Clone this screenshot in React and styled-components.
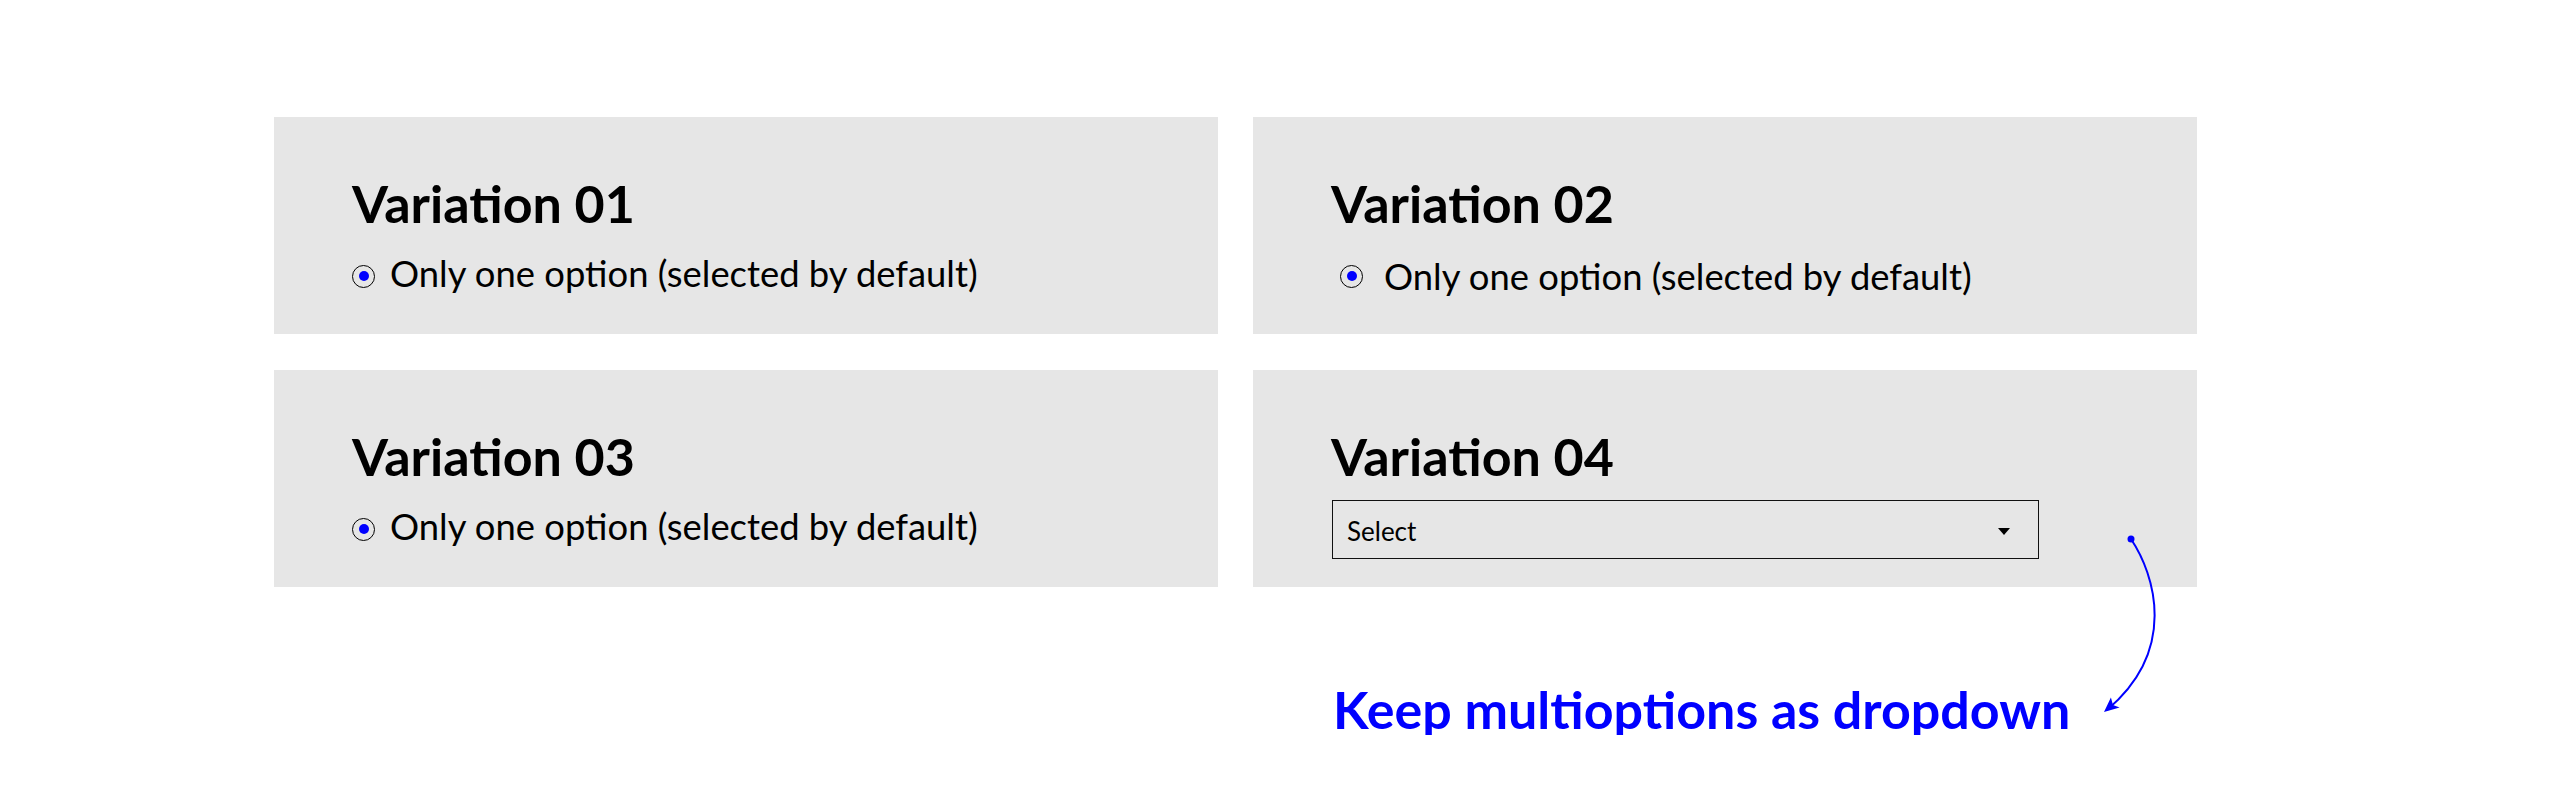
import React from "react";
import styled, { createGlobalStyle } from "styled-components";

const GlobalStyle = createGlobalStyle`
  body {
    margin: 0;
    background: #ffffff;
    font-family: Lato, "Open Sans", sans-serif;
  }
`;

const Page = styled.div`
  padding: 117px 0 0 274px;
`;

const Grid = styled.div`
  display: grid;
  grid-template-columns: 944px 944px;
  column-gap: 35px;
  row-gap: 36px;
`;

const Panel = styled.div`
  position: relative;
  height: 217px;
  box-sizing: border-box;
  background: #e6e6e6;
  padding: 60px 0 0 78px;
`;

const Heading = styled.h2`
  margin: 0;
  font-size: 52px;
  line-height: 52px;
  font-weight: 700;
  color: #000;
`;

const OptionRow = styled.label`
  display: flex;
  align-items: center;
  gap: ${(p) => (p.$wide ? 21 : 15)}px;
  margin: ${(p) => (p.$wide ? "29px 0 0 9px" : "26px 0 0 0")};
  font-size: 36.4px;
  line-height: 36px;
  color: #000;
`;

const Radio = styled.span`
  display: flex;
  align-items: center;
  justify-content: center;
  width: 23px;
  height: 23px;
  margin-top: ${(p) => (p.$wide ? 0 : 6)}px;
  box-sizing: border-box;
  border: 1.5px solid #000;
  border-radius: 50%;
  &::after {
    content: "";
    width: 10px;
    height: 10px;
    border-radius: 50%;
    background: #0000ff;
  }
`;

const SelectBox = styled.div`
  display: flex;
  align-items: center;
  justify-content: space-between;
  width: 707px;
  height: 59px;
  box-sizing: border-box;
  margin: 18px 0 0 1px;
  padding: 3px 28px 0 14px;
  border: 1.5px solid #111;
  font-size: 26px;
  color: #000;
`;

const Caret = styled.span`
  width: 0;
  height: 0;
  border-left: 6px solid transparent;
  border-right: 6px solid transparent;
  border-top: 7px solid #000;
`;

const Arrow = styled.svg`
  position: absolute;
  left: 840px;
  top: 160px;
  overflow: visible;
`;

const Note = styled.div`
  grid-column: 2;
  padding: 60px 0 0 80px;
  font-size: 52px;
  line-height: 52px;
  font-weight: 700;
  color: #0000ff;
`;

function Option({ wide }) {
  return (
    <OptionRow $wide={wide}>
      <Radio $wide={wide} />
      Only one option (selected by default)
    </OptionRow>
  );
}

export default function App() {
  return (
    <>
      <GlobalStyle />
      <Page>
        <Grid>
          <Panel>
            <Heading>Variation 01</Heading>
            <Option />
          </Panel>
          <Panel>
            <Heading>Variation 02</Heading>
            <Option wide />
          </Panel>
          <Panel>
            <Heading>Variation 03</Heading>
            <Option />
          </Panel>
          <Panel>
            <Heading>Variation 04</Heading>
            <SelectBox>
              Select
              <Caret />
            </SelectBox>
            <Arrow width="80" height="190" viewBox="0 0 80 190">
              <circle cx="38" cy="9" r="3.5" fill="#0000ff" />
              <path d="M38 9 C62 45, 85 120, 14 180" fill="none" stroke="#0000ff" strokeWidth="2" />
              <path d="M11 182 L17.9 167.4 L20 175 L26.6 177.6 Z" fill="#0000ff" />
            </Arrow>
          </Panel>
          <Note>Keep multioptions as dropdown</Note>
        </Grid>
      </Page>
    </>
  );
}
